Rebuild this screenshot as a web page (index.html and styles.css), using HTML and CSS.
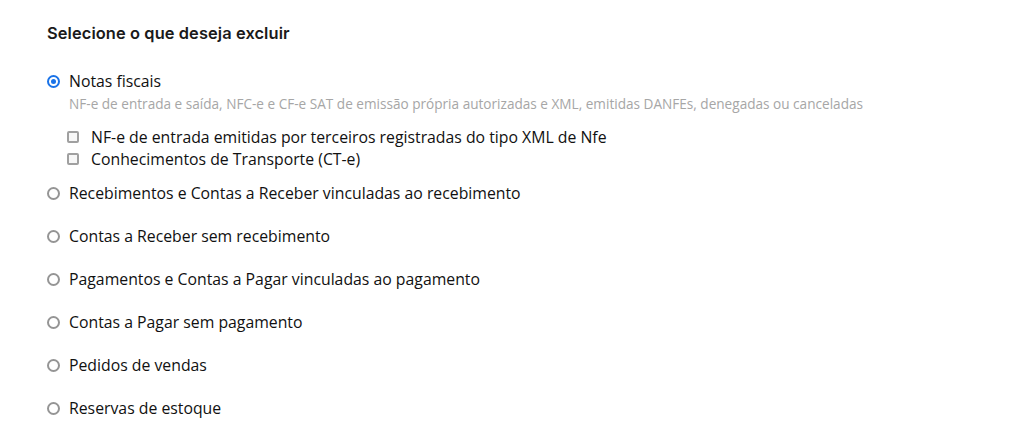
FILE: index.html
```html
<!DOCTYPE html>
<html lang="pt-BR">
<head>
<meta charset="utf-8">
<link rel="stylesheet" href="styles.css">
</head>
<body>
<main class="panel">
  <h2 class="title">Selecione o que deseja excluir</h2>
  <ul class="options">
    <li class="option">
      <label class="row"><span class="radio checked"></span><span class="label">Notas fiscais</span></label>
      <p class="desc">NF-e de entrada e saída, NFC-e e CF-e SAT de emissão própria autorizadas e XML, emitidas DANFEs, denegadas ou canceladas</p>
      <div class="subs">
        <label class="sub"><span class="check"></span><span class="label">NF-e de entrada emitidas por terceiros registradas do tipo XML de Nfe</span></label>
        <label class="sub"><span class="check"></span><span class="label">Conhecimentos de Transporte (CT-e)</span></label>
      </div>
    </li>
    <li class="option"><label class="row"><span class="radio"></span><span class="label">Recebimentos e Contas a Receber vinculadas ao recebimento</span></label></li>
    <li class="option"><label class="row"><span class="radio"></span><span class="label">Contas a Receber sem recebimento</span></label></li>
    <li class="option"><label class="row"><span class="radio"></span><span class="label">Pagamentos e Contas a Pagar vinculadas ao pagamento</span></label></li>
    <li class="option"><label class="row"><span class="radio"></span><span class="label">Contas a Pagar sem pagamento</span></label></li>
    <li class="option"><label class="row"><span class="radio"></span><span class="label">Pedidos de vendas</span></label></li>
    <li class="option"><label class="row"><span class="radio"></span><span class="label">Reservas de estoque</span></label></li>
  </ul>
</main>
</body>
</html>
```
FILE: styles.css
```css
* { box-sizing: border-box; }
html, body { margin: 0; padding: 0; background: #fff; }
body { font-family: "Open Sans", "Noto Sans", sans-serif; color: #141414; }

.panel { padding: 22px 0 0 47px; }

.title {
  margin: 0;
  font-family: "Inter", sans-serif;
  font-weight: 600;
  font-size: 16.4px;
  line-height: 22px;
  color: #1a1a1a;
  letter-spacing: 0.1px;
}

.options { list-style: none; margin: 26px 0 0; padding: 0; display: flex; flex-direction: column; gap: 21px; }

.row, .sub { display: flex; align-items: center; cursor: pointer; }
.label { font-size: 15.8px; line-height: 22px; color: #111; }

.radio {
  width: 13px; height: 13px; border-radius: 50%;
  border: 2.5px solid #959595; background: #fff;
  margin-right: 9px; flex: none;
}
.radio.checked { border: 2px solid #1a73e8; position: relative; }
.radio.checked::after {
  content: ""; position: absolute; left: 2px; top: 2px;
  width: 5px; height: 5px; border-radius: 50%; background: #1a73e8;
}

.desc {
  margin: 3px 0 0 22px;
  font-size: 13.6px; line-height: 18px; color: #a6a6a6;
}

.subs { margin: 13px 0 -9px 20px; display: flex; flex-direction: column; }
.check {
  width: 12px; height: 12px; border: 2px solid #a0a0a0; border-radius: 2px;
  background: #f7f7f7; margin-right: 12px; flex: none;
}
```
